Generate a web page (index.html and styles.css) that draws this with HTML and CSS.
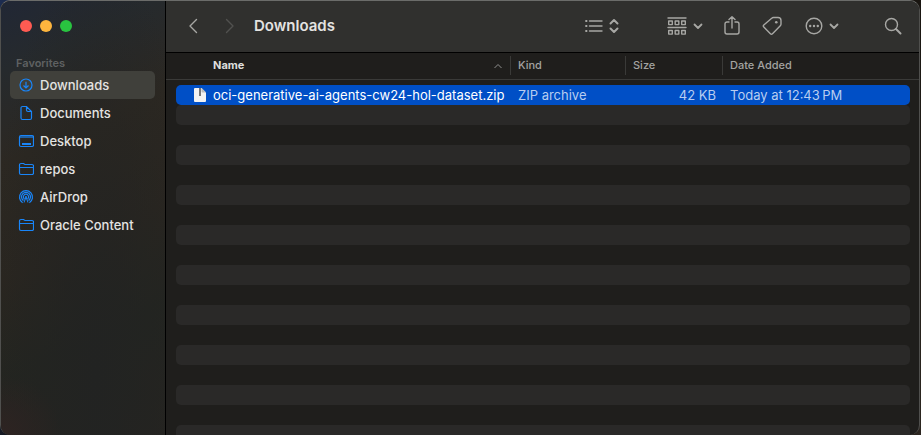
FILE: index.html
```html
<!DOCTYPE html>
<html lang="en">
<head>
<meta charset="utf-8">
<title>Downloads</title>
<link rel="stylesheet" href="styles.css">
</head>
<body>
<div class="window">
  <aside class="sidebar">
    <div class="lights">
      <button class="light close" aria-label="Close"></button>
      <button class="light minimize" aria-label="Minimize"></button>
      <button class="light maximize" aria-label="Zoom"></button>
    </div>
    <h2 class="section">Favorites</h2>
    <nav class="places">
      <a class="place current" href="#downloads"><svg class="place-icon" viewBox="0 0 16 16"><circle cx="8" cy="8" r="6"/><path d="M8 4.800v6M5.500 8.500 8 11l2.500-2.500"/></svg>Downloads</a>
      <a class="place" href="#documents"><svg class="place-icon" viewBox="0 0 16 16"><path d="M8.500 1.500H4.500a1.500 1.500 0 0 0-1.500 1.500v10a1.500 1.500 0 0 0 1.500 1.500h7.500a1.500 1.500 0 0 0 1.500-1.500V6.500zM8.500 1.500V5a1.500 1.500 0 0 0 1.500 1.500h3.500"/></svg>Documents</a>
      <a class="place" href="#desktop"><svg class="place-icon" viewBox="0 0 16 16"><rect x="1.500" y="2.500" width="14" height="11" rx="1.500"/><path d="M2 4h13" opacity=".6" stroke-width="2"/><path d="M4 11h9" stroke-width="2"/></svg>Desktop</a>
      <a class="place" href="#repos"><svg class="place-icon" viewBox="0 0 16 16"><path d="M1.500 12V4A1.500 1.500 0 0 1 3 2.500h2.500l1.500 1h7A1.500 1.500 0 0 1 15.500 5v7a1.500 1.500 0 0 1-1.500 1.500H3A1.500 1.500 0 0 1 1.500 12zM1.500 6.500h14"/></svg>repos</a>
      <a class="place" href="#airdrop"><svg class="place-icon" viewBox="0 0 16 16"><path d="M4.600 13.700a6.500 6.500 0 1 1 6.800 0M5.500 11.600a4.500 4.500 0 1 1 5 0M6.500 9.900a2.600 2.600 0 1 1 3 0"/><path class="solid" d="M8 7a1 1 0 0 1 .8 1.600L10.500 13.500h-1L8 9.500l-1.500 4h-1L7.200 8.600A1 1 0 0 1 8 7z"/></svg>AirDrop</a>
      <a class="place" href="#oracle"><svg class="place-icon" viewBox="0 0 16 16"><path d="M1.500 12V4A1.500 1.500 0 0 1 3 2.500h2.500l1.500 1h7A1.500 1.500 0 0 1 15.500 5v7a1.500 1.500 0 0 1-1.500 1.500H3A1.500 1.500 0 0 1 1.500 12zM1.500 6.500h14"/></svg>Oracle Content</a>
    </nav>
  </aside>
  <main class="content">
    <header class="toolbar">
      <div class="history">
        <button class="tool" aria-label="Back"><svg width="10" height="16" viewBox="0 0 10 16"><path d="M8.500 1.500 2 8l6.500 6.500"/></svg></button>
        <button class="tool" aria-label="Forward" disabled><svg width="10" height="16" viewBox="0 0 10 16"><path d="M1.500 1.500 8 8l-6.500 6.500"/></svg></button>
      </div>
      <h1 class="title">Downloads</h1>
      <div class="tools">
        <button class="tool view" aria-label="View as list"><svg width="18" height="16" viewBox="0 0 18 16"><path d="M4.500 3H17M4.500 8H17M4.500 13H17"/><path d="M1 3h.6M1 8h.6M1 13h.6" stroke-width="1.800"/></svg><svg width="10" height="16" viewBox="0 0 10 16"><path d="M1.500 5.500 5 2l3.500 3.500M1.500 10.500 5 14l3.500-3.500" stroke-width="2"/></svg></button>
        <button class="tool group" aria-label="Group items"><svg width="20" height="18" viewBox="0 0 20 18"><path d="M1 1h18M1 10.500h18"/><path d="M1.700 4h3.600v3.600H1.700zM8.200 4h3.600v3.600H8.200zM14.700 4h3.600v3.600h-3.600zM1.700 13.500h3.600v3.600H1.700zM8.200 13.500h3.600v3.600H8.200zM14.700 13.500h3.600v3.600h-3.600z"/></svg><svg width="10" height="16" viewBox="0 0 10 16"><path d="m1.500 6.500 3.500 3.500 3.500-3.500" stroke-width="1.800"/></svg></button>
        <button class="tool share" aria-label="Share"><svg width="16" height="20" viewBox="0 0 16 20"><path d="M5 6H3a2 2 0 0 0-2 2v8a2 2 0 0 0 2 2h10a2 2 0 0 0 2-2V8a2 2 0 0 0-2-2h-2M8 12V1M5 3.600 8 .8l3 2.800"/></svg></button>
        <button class="tool tag" aria-label="Edit tags"><svg width="20" height="20" viewBox="0 0 20 20"><path d="M11.500 1.500h4.500a3 3 0 0 1 3 3v3.500a2.500 2.500 0 0 1-.7 1.800l-7.800 7.900a1.500 1.500 0 0 1-2.100 0l-6.600-6.600a1.500 1.500 0 0 1 0-2.100l7.900-6.800a2.500 2.500 0 0 1 1.800-.7z"/><circle class="dot" cx="14.300" cy="6.200" r="1.300"/></svg></button>
        <button class="tool more" aria-label="Actions"><svg width="18" height="18" viewBox="0 0 18 18"><circle cx="9" cy="9" r="7.800"/><g class="dot"><circle cx="5.200" cy="9" r="1.200"/><circle cx="9" cy="9" r="1.200"/><circle cx="12.800" cy="9" r="1.200"/></g></svg><svg width="10" height="16" viewBox="0 0 10 16"><path d="m1.500 6.500 3.500 3.500 3.500-3.500" stroke-width="1.800"/></svg></button>
        <button class="tool search" aria-label="Search"><svg width="18" height="18" viewBox="0 0 18 18"><circle cx="7.500" cy="7.500" r="6"/><path d="m12 12 4.500 4.500" stroke-width="2"/></svg></button>
      </div>
    </header>
    <div class="list">
      <table class="files">
        <colgroup><col class="col-name"><col class="col-kind"><col class="col-size"><col></colgroup>
        <thead>
          <tr>
            <th class="sorted" aria-sort="ascending"><div class="head">Name<svg width="8" height="6" viewBox="0 0 8 6"><path d="M.5 5 4 1.500 7.500 5"/></svg></div></th>
            <th><div class="head">Kind</div></th>
            <th><div class="head">Size</div></th>
            <th><div class="head last">Date Added</div></th>
          </tr>
        </thead>
        <tbody>
          <tr class="selected">
            <td><div class="file"><svg width="12" height="14" viewBox="0 0 12 14"><path fill="#f2f2f2" d="M1 0h6.500L12 4.500V13a1 1 0 0 1-1 1H1a1 1 0 0 1-1-1V1a1 1 0 0 1 1-1z"/><path fill="#bdbdbd" d="M7.500 0 12 4.500H8.500a1 1 0 0 1-1-1z"/><path fill="#777" d="M5 0h2v8H5z"/></svg>oci-generative-ai-agents-cw24-hol-dataset.zip</div></td>
            <td>ZIP archive</td>
            <td class="size">42 KB</td>
            <td>Today at 12:43&#8239;PM</td>
          </tr>
          <tr><td colspan="4"></td></tr>
          <tr><td colspan="4"></td></tr>
          <tr><td colspan="4"></td></tr>
          <tr><td colspan="4"></td></tr>
          <tr><td colspan="4"></td></tr>
          <tr><td colspan="4"></td></tr>
          <tr><td colspan="4"></td></tr>
          <tr><td colspan="4"></td></tr>
          <tr><td colspan="4"></td></tr>
          <tr><td colspan="4"></td></tr>
          <tr><td colspan="4"></td></tr>
          <tr><td colspan="4"></td></tr>
          <tr><td colspan="4"></td></tr>
          <tr><td colspan="4"></td></tr>
          <tr><td colspan="4"></td></tr>
          <tr><td colspan="4"></td></tr>
          <tr><td colspan="4"></td></tr>
        </tbody>
      </table>
    </div>
  </main>
</div>
</body>
</html>
```
FILE: styles.css
```css
* { box-sizing: border-box; }

body {
  margin: 0;
  padding-right: 1px;
  background: linear-gradient(100deg, #1c2c50, #14100c 12%, #14110d 90%, #2c2620);
  font: 500 13px/20px Inter, "Liberation Sans", sans-serif;
  color: #e4e3e1;
}

svg { display: block; flex: none; fill: none; stroke: currentColor; }

button { border: 0; padding: 0; background: none; color: inherit; font: inherit; }

.window {
  display: flex;
  height: 100vh;
  overflow: hidden;
  border: 1px solid #50504e;
  border-top-color: #6b6c6a;
  border-bottom: 0;
  border-radius: 10px;
  background: #1f1e1c;
}

.sidebar {
  flex: none;
  width: 165px;
  padding: 19px 10px 0 9px;
  border-right: 1px solid #000;
  background:
    radial-gradient(circle at 0 100%, #2e2322, transparent 60px),
    radial-gradient(ellipse at 58% 86%, #222322, transparent 110px),
    linear-gradient(155deg, #212735 0, #262a2d 14%, #2c2822 32%, #2a2620 55%, #232520 75%, #262420 100%);
}

.lights { display: flex; gap: 8px; padding-left: 10px; }
.light { width: 12px; height: 12px; border-radius: 50%; }
.close { background: #ff5b52; }
.minimize { background: #fdb53e; }
.maximize { background: #29c440; }

.section {
  margin: 23px 0 0;
  padding-left: 6px;
  font-size: 11px;
  font-weight: 600;
  line-height: 16px;
  color: #5f6162;
}

.place {
  display: flex;
  align-items: center;
  gap: 6px;
  height: 28px;
  padding-left: 8px;
  border-radius: 5px;
  color: inherit;
  text-decoration: none;
}
.current { background: #40403b; }
.place-icon { width: 16px; height: 16px; color: #1985f8; stroke-width: 1.2; }
.solid { fill: currentColor; stroke: none; }

.content { flex: 1; min-width: 0; }

.toolbar {
  display: flex;
  align-items: center;
  height: 52px;
  padding: 0 17px 2px 22px;
  border-bottom: 1px solid #000;
  background: #30302e;
}
.tool { display: flex; align-items: center; color: #a7a7a4; }
.tool:disabled { color: #51514f; }
.tool svg { stroke-width: 1.4; stroke-linecap: round; stroke-linejoin: round; }
.dot { fill: currentColor; stroke: none; }
.history { display: flex; gap: 27px; }
.title { margin: 0 0 0 19px; font-size: 15px; font-weight: 600; line-height: 20px; }
.tools { display: flex; align-items: center; margin-left: auto; }
.view, .group, .more { gap: 6px; }
.group { margin-left: 48px; }
.share { margin-left: 21px; }
.tag { margin-left: 22px; }
.more { margin-left: 23px; }
.search { margin-left: 45px; }

.list {
  padding: 0 9px 0 10px;
  background: linear-gradient(#3a3a38, #3a3a38) 0 26px / 100% 1px no-repeat;
}
.files { width: 100%; table-layout: fixed; border-spacing: 0; }
.col-name { width: 335px; }
.col-kind { width: 115px; }
.col-size { width: 97px; }

th {
  padding: 3px 0 10px;
  font-size: 11px;
  font-weight: 500;
  line-height: 19px;
  text-align: left;
  color: #a3a3a1;
}
.head {
  display: flex;
  align-items: center;
  justify-content: space-between;
  padding: 0 8px 0 7px;
  border-right: 1px solid #3a3a38;
}
.last { border-right: 0; }
.sorted .head { padding-left: 37px; font-weight: 700; color: #dededc; }
.sorted svg { color: #8f8f8d; }

td { height: 20px; padding: 0 7px; font-weight: 400; white-space: nowrap; }
tbody tr:nth-child(even) td { border-radius: 5px; background: #2a2928; }
.selected td { background: #004fc6; color: #b8cdf0; }
.selected td:first-child { padding: 0; border-radius: 5px 0 0 5px; color: #fff; }
.selected td:last-child { border-radius: 0 5px 5px 0; }
.file { display: flex; align-items: center; gap: 7px; padding-left: 18px; }
.file svg { stroke: none; }
.size { text-align: right; }
```
